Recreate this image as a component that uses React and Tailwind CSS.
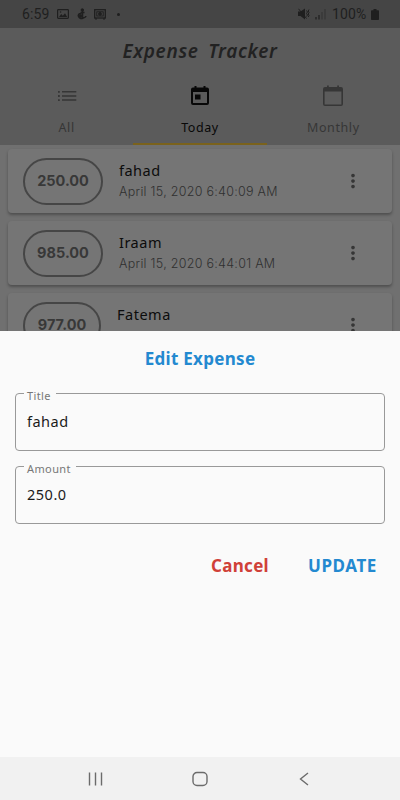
import { MdMoreVert } from 'react-icons/md';

const tabs = [
    { id: 'all', label: 'All' },
    { id: 'today', label: 'Today' },
    { id: 'monthly', label: 'Monthly' },
];

const expenses = [
    { id: 1, amount: '250.00', title: 'fahad', date: 'April 15, 2020 6:40:09 AM' },
    { id: 2, amount: '985.00', title: 'Iraam', date: 'April 15, 2020 6:44:01 AM' },
    { id: 3, amount: '977.00', title: 'Fatema', date: '' },
];

const StatusBar = () => (
    <div className="h-7 flex-shrink-0 bg-[#454545] text-[#1f1f1f] flex items-center justify-between pl-[22px] pr-[21px] font-[Roboto,sans-serif]">
        <div className="flex items-center">
            <span className="w-[35px] text-[14px] leading-none tracking-[0.1px]">6:59</span>
            <svg className="w-3 h-[10px]" viewBox="0 0 12 10" fill="none">
                <rect x="0.6" y="0.6" width="10.8" height="8.8" rx="0.8" stroke="currentColor" strokeWidth="1.2" />
                <path d="M2 8l2.2-3 1.6 1.8L8 4.3 10.2 8z" fill="currentColor" />
                <circle cx="3.6" cy="3" r="0.8" fill="currentColor" />
            </svg>
            <svg className="ml-[8px] w-[10px] h-3" viewBox="0 0 10 12" fill="none" stroke="currentColor">
                <path d="M5.5 1v9M3.5 4.5h4M4.5 5.5C2 5 .8 7 1.5 8.5S4 11 5.5 10.3 8.8 9.5 9 8" strokeWidth="1.5" />
                <circle cx="5.3" cy="2" r="1.3" fill="currentColor" strokeWidth="0.8" />
                <circle cx="3.5" cy="8" r="1.5" fill="currentColor" strokeWidth="0.8" />
            </svg>
            <svg className="ml-[7px] w-3 h-[11px]" viewBox="0 0 12 11" fill="none" stroke="currentColor">
                <rect x="0.7" y="0.7" width="10.6" height="8.3" strokeWidth="1.3" />
                <rect x="2.8" y="2.8" width="6.4" height="4.2" strokeWidth="1" />
                <circle cx="6" cy="4.9" r="1.4" fill="currentColor" />
                <path d="M2 9v1.8M10 9v1.8" strokeWidth="1.3" />
            </svg>
            <span className="ml-[11px] size-[3px] rounded-full bg-current" />
        </div>
        <div className="flex items-center">
            <svg className="w-3 h-3" viewBox="0 0 12 12" fill="none" stroke="currentColor">
                <path d="M0 3.5h2.5L7 .5v11L2.5 8H0z" fill="currentColor" stroke="none" />
                <path d="M0.5 0.8L8.5 10.5" strokeWidth="1" />
                <path d="M8.500 2.500l1 1.500-1 1.500 1 1.500-1 1.500M11 1.5l-.8 1.5.8 1.5-.8 1.5.8 1.5-.8 1.5" strokeWidth="1" />
            </svg>
            <svg className="ml-[5px] w-[11px] h-3" viewBox="0 0 11 12" stroke="currentColor">
                <path d="M1 9v2.5M4 7v4.5" strokeWidth="1.2" />
                <path d="M7 4v7.5M10 1v10.5" strokeWidth="1.2" opacity="0.4" />
            </svg>
            <span className="ml-[6px] w-[35px] text-[14px] leading-none tracking-[0.1px]">100%</span>
            <svg className="ml-[4px] w-2 h-[11px]" viewBox="0 0 8 11" fill="currentColor">
                <path d="M2.5 0h3v1.2H7.2a.8.8 0 01.8.8v8.2a.8.8 0 01-.8.8H.8a.8.8 0 01-.8-.8V2a.8.8 0 01.8-.8h1.7z" />
            </svg>
        </div>
    </div>
);

const TabIcon = ({ id }) => {
    if (id === 'all') {
        return (
            <svg className="w-5 h-3" viewBox="0 0 20 12" fill="currentColor">
                <path d="M1 1h1.8v1.8H1zM1 5.1h1.8v1.8H1zM1 9.2h1.8V11H1zM5 1.1h14.3v1.5H5zM5 5.2h14.3v1.5H5zM5 9.3h14.3v1.5H5z" />
            </svg>
        );
    }
    if (id === 'today') {
        return (
            <svg className="-mt-px size-6" viewBox="0 0 24 24" fill="currentColor">
                <path fillRule="evenodd" d="M5 3.500h1.500V2h2v1.500h7V2h2v1.500H19a2 2 0 012 2V19a2 2 0 01-2 2H5a2 2 0 01-2-2V5.500a2 2 0 012-2zM5 8v11h14V8z" />
                <rect x="7" y="10.500" width="5.500" height="5" />
            </svg>
        );
    }
    return (
        <svg className="size-6" viewBox="0 0 24 24" fill="currentColor">
            <path fillRule="evenodd" d="M4 3h2V1.5h1.8V3h8.4V1.5H18V3h2a2 2 0 012 2v15a2 2 0 01-2 2H4a2 2 0 01-2-2V5a2 2 0 012-2zM3.6 7.5v13h16.8v-13z" />
        </svg>
    );
};

const ExpenseCard = ({ expense }) => {
    const isShort = expense.amount === '977.00';
    return (
        <div className="h-16 flex-shrink-0 flex items-center rounded-[4px] bg-[#757575] pl-[15px] pr-7 shadow-[0_2px_3px_0_rgba(0,0,0,0.3)]">
            <div className={`${isShort ? 'w-[78px]' : 'w-20'} h-[47px] flex-shrink-0 flex items-center justify-center rounded-full border-2 border-[#464646] pb-px font-[Inter,sans-serif] text-[14.5px] leading-5 font-bold text-[#383838]`}>
                {expense.amount}
            </div>
            <div className="ml-4 flex-1 whitespace-nowrap">
                <p className="-mt-[2px] text-[14.5px] leading-[22px] text-[#0c0c0c] tracking-[0.5px]">{expense.title}</p>
                <p className="h-5 font-[Inter,sans-serif] text-[12.5px] leading-[21px] font-light tracking-[0.28px] text-[#303030]">{expense.date}</p>
            </div>
            <MdMoreVert size={22} className="text-[#363636]" />
        </div>
    );
};

const Field = ({ label, value }) => (
    <fieldset className="h-[66px] rounded-[4px] border border-[#999999] pl-2 pb-2">
        <legend className="h-4 pl-[3px] pr-[5px] text-[11px] leading-[21px] tracking-[0.4px] text-[#777777]">{label}</legend>
        <p className="pl-[3px] pt-[10px] text-[14.5px] leading-5 tracking-[0.5px] text-[#1a1a1a]">{value}</p>
    </fieldset>
);

const App = () => {
    return (
        <div className="w-[400px] h-[800px] flex flex-col overflow-hidden bg-[#707070] font-['Noto_Sans','Open_Sans',sans-serif]">
            <StatusBar />

            {/* App bar with tabs */}
            <header className="h-[117px] flex-shrink-0 flex flex-col bg-[#5b5b5b]">
                <h1 className="h-[47px] flex items-center justify-center text-[19px] font-semibold italic tracking-[0.7px] [word-spacing:4px] text-[#222222]">
                    Expense Tracker
                </h1>
                <nav className="flex-1 grid grid-cols-3">
                    {tabs.map((tab) => (
                        <div
                            key={tab.id}
                            className={`flex flex-col items-center border-b-2 ${tab.id === 'today' ? 'border-[#7a621c] text-[#080808]' : 'border-transparent text-[#363636]'}`}
                        >
                            <div className="mt-[9px] h-6 flex items-center">
                                <TabIcon id={tab.id} />
                            </div>
                            <span className="mt-[9px] text-[12.5px] leading-[21px] tracking-[0.6px]">{tab.label}</span>
                        </div>
                    ))}
                </nav>
            </header>

            {/* Expense list, cut off by the sheet */}
            <main className="h-[186px] flex-shrink-0 overflow-hidden px-2 pt-1 flex flex-col gap-2">
                {expenses.map((expense) => (
                    <ExpenseCard key={expense.id} expense={expense} />
                ))}
            </main>

            {/* Edit sheet */}
            <section className="flex-1 bg-[#fafafa] px-[15px] pt-4">
                <h2 className="text-center text-[17px] leading-6 font-bold tracking-[0.3px] text-[#2389d0]">Edit Expense</h2>
                <div className="mt-[14px] flex flex-col gap-[7px]">
                    <Field label="Title" value="fahad" />
                    <Field label="Amount" value="250.0" />
                </div>
                <div className="mt-[30px] flex justify-end gap-[39px] pr-2 text-[17px] leading-6 font-bold tracking-[0.3px]">
                    <button className="text-[#d04038]">Cancel</button>
                    <button className="tracking-[0.6px] text-[#2389d0]">UPDATE</button>
                </div>
            </section>

            {/* System navigation */}
            <footer className="h-[43px] flex-shrink-0 flex items-center justify-between bg-[#f1f1f1] pl-[87px] pr-[88px] text-[#6b6b6b]">
                <svg className="w-4 h-4" viewBox="0 0 16 16" fill="none" stroke="currentColor" strokeWidth="1.4">
                    <path d="M2.5 1.5v13M8.5 1.5v13M14.5 1.5v13" />
                </svg>
                <svg className="w-4 h-4" viewBox="0 0 16 16" fill="none" stroke="currentColor" strokeWidth="1.4">
                    <rect x="1" y="1.5" width="14" height="13" rx="4" />
                </svg>
                <svg className="w-4 h-4" viewBox="0 0 16 16" fill="none" stroke="currentColor" strokeWidth="1.4">
                    <path d="M12 2L4.5 8l7.5 6" />
                </svg>
            </footer>
        </div>
    );
};

export default App;
